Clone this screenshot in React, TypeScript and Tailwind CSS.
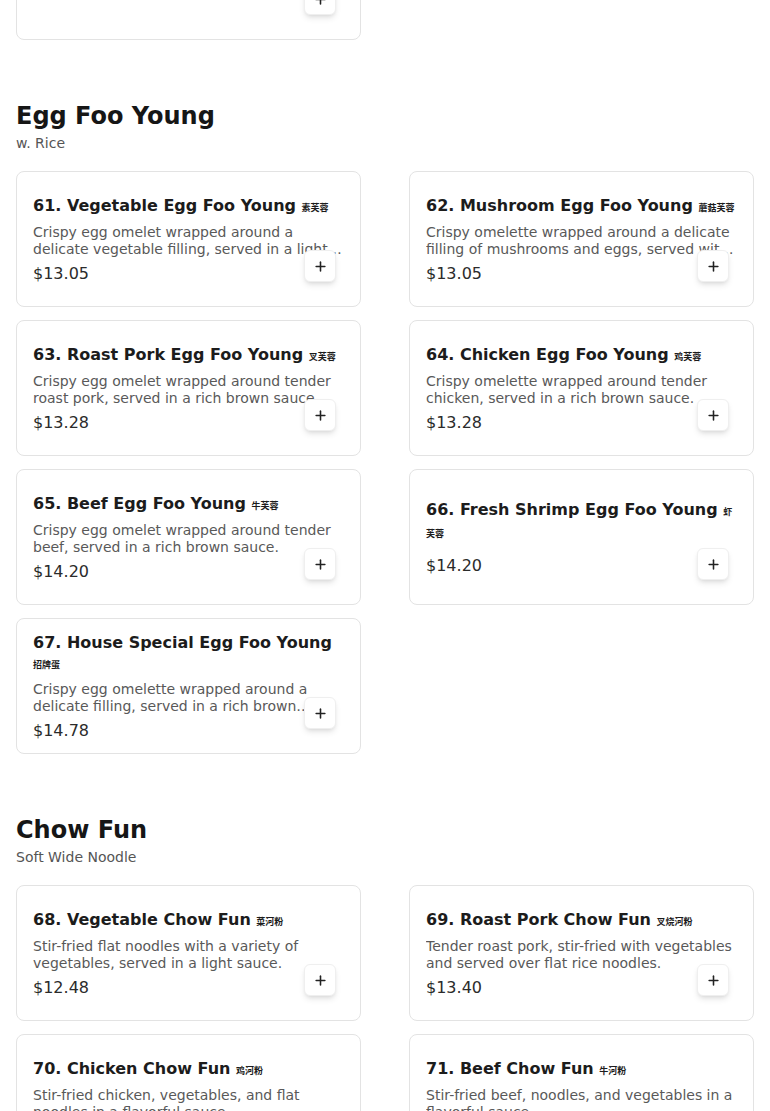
import React from "react";
import { Plus } from "lucide-react";

type Item = { num: number; name: string; zh: string; desc?: string; price: string };

const eggFooYoung: Item[] = [
  { num: 61, name: "Vegetable Egg Foo Young", zh: "素芙蓉", desc: "Crispy egg omelet wrapped around a delicate vegetable filling, served in a light brown sauce.", price: "$13.05" },
  { num: 62, name: "Mushroom Egg Foo Young", zh: "蘑菇芙蓉", desc: "Crispy omelette wrapped around a delicate filling of mushrooms and eggs, served with a rich brown sauce.", price: "$13.05" },
  { num: 63, name: "Roast Pork Egg Foo Young", zh: "叉芙蓉", desc: "Crispy egg omelet wrapped around tender roast pork, served in a rich brown sauce.", price: "$13.28" },
  { num: 64, name: "Chicken Egg Foo Young", zh: "鸡芙蓉", desc: "Crispy omelette wrapped around tender chicken, served in a rich brown sauce.", price: "$13.28" },
  { num: 65, name: "Beef Egg Foo Young", zh: "牛芙蓉", desc: "Crispy egg omelet wrapped around tender beef, served in a rich brown sauce.", price: "$14.20" },
  { num: 66, name: "Fresh Shrimp Egg Foo Young", zh: "虾芙蓉", price: "$14.20" },
  { num: 67, name: "House Special Egg Foo Young", zh: "招牌蛋", desc: "Crispy egg omelette wrapped around a delicate filling, served in a rich brown sauce.", price: "$14.78" },
];

const chowFun: Item[] = [
  { num: 68, name: "Vegetable Chow Fun", zh: "菜河粉", desc: "Stir-fried flat noodles with a variety of vegetables, served in a light sauce.", price: "$12.48" },
  { num: 69, name: "Roast Pork Chow Fun", zh: "叉烧河粉", desc: "Tender roast pork, stir-fried with vegetables and served over flat rice noodles.", price: "$13.40" },
  { num: 70, name: "Chicken Chow Fun", zh: "鸡河粉", desc: "Stir-fried chicken, vegetables, and flat noodles in a flavorful sauce.", price: "$13.40" },
  { num: 71, name: "Beef Chow Fun", zh: "牛河粉", desc: "Stir-fried beef, noodles, and vegetables in a flavorful sauce.", price: "$13.98" },
];

function Card({ item }: { item: Item }) {
  return (
    <div className="relative h-[136px] rounded-lg border border-[#e3e3e3] bg-white px-4 pt-[4px] flex flex-col justify-center">
      <h3 className="text-base font-bold leading-5 text-[#1c1c1c]">
        {item.num}. {item.name}{" "}
        <span className="text-[9px] font-bold font-['Noto_Sans_CJK_SC',sans-serif]">{item.zh}</span>
      </h3>
      <p className="mt-[6px] text-sm leading-[17px] text-[#595959] line-clamp-2">{item.desc ?? ""}</p>
      <div className="mt-1 text-base leading-6 text-[#2b2b2b]">{item.price}</div>
      <button className="absolute right-6 bottom-6 flex h-8 w-8 items-center justify-center rounded-md border border-[#efefef] bg-white shadow-md">
        <Plus size={15} strokeWidth={2.5} className="text-[#222]" />
      </button>
    </div>
  );
}

function Section({ title, subtitle, items }: { title: string; subtitle: string; items: Item[] }) {
  return (
    <section className="mt-[60px]">
      <h2 className="text-2xl font-bold leading-8 text-[#161616]">{title}</h2>
      <p className="mt-px text-sm leading-5 text-[#555]">{subtitle}</p>
      <div className="mt-[18px] grid grid-cols-2 gap-x-12 gap-y-[13px]">
        {items.map((it) => (
          <Card key={it.num} item={it} />
        ))}
      </div>
    </section>
  );
}

export default function App() {
  return (
    <div className="h-screen overflow-hidden bg-white font-['DejaVu_Sans',sans-serif]">
      <div className="px-4">
        <div className="-mt-[96px] grid grid-cols-2 gap-x-12">
          <Card item={{ num: 60, name: "Shrimp with Lobster Sauce", zh: "虾龙糊", price: "$14.20" }} />
        </div>
        <Section title="Egg Foo Young" subtitle="w. Rice" items={eggFooYoung} />
        <Section title="Chow Fun" subtitle="Soft Wide Noodle" items={chowFun} />
      </div>
    </div>
  );
}
